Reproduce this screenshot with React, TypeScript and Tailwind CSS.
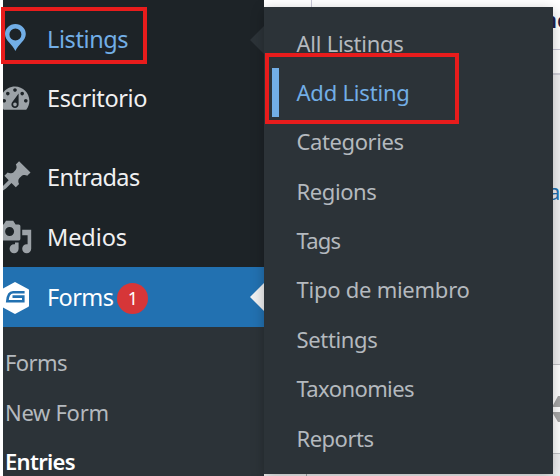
import type { ReactNode } from "react";

const iconBox = "absolute left-[-6px] top-[12px] h-9 w-9";

function PinIcon() {
  return (
    <svg viewBox="0 0 36 36" className={iconBox} fill="#72aee6">
      <path
        fillRule="evenodd"
        d="M18.4 3C12.5 3 8 7.4 8 13.1c0 6.7 7.2 9.9 10.4 16.9 3.2-7 10.4-10.2 10.4-16.9C28.8 7.4 24.3 3 18.4 3zM18.4 7.6a6 6 0 1 1 0 12 6 6 0 0 1 0-12z"
      />
    </svg>
  );
}

function DashIcon({ d }: { d: string }) {
  return (
    <svg viewBox="0 0 20 20" className={iconBox} fill="#9ca2a7">
      <path d={d} />
    </svg>
  );
}

const dashboard =
  "M3.76 16h12.48c1.1-1.37 1.76-3.11 1.76-5 0-4.42-3.58-8-8-8s-8 3.58-8 8c0 1.89.66 3.63 1.76 5zM10 4c.55 0 1 .45 1 1s-.45 1-1 1-1-.45-1-1 .45-1 1-1zM6 6c.55 0 1 .45 1 1s-.45 1-1 1-1-.45-1-1 .45-1 1-1zm8 0c.55 0 1 .45 1 1s-.45 1-1 1-1-.45-1-1 .45-1 1-1zm-5.37 5.55L12 7v6c0 1.1-.9 2-2 2s-2-.9-2-2c0-.57.24-1.08.63-1.45zM4 10c.55 0 1 .45 1 1s-.45 1-1 1-1-.45-1-1 .45-1 1-1zm12 0c.55 0 1 .45 1 1s-.45 1-1 1-1-.45-1-1 .45-1 1-1zm-5 3c0-.55-.45-1-1-1s-1 .45-1 1 .45 1 1 1 1-.45 1-1z";
const thumbtack =
  "M10.44 3.02l1.82-1.82 6.36 6.35-1.83 1.82c-1.05-.68-2.48-.57-3.41.36l-.75.75c-.92.93-1.04 2.35-.35 3.41l-1.83 1.82-2.41-2.41-2.8 2.79c-.42.42-3.38 2.71-3.8 2.29s1.86-3.39 2.28-3.81l2.79-2.79L4.1 9.36l1.83-1.82c1.05.69 2.48.57 3.4-.36l.75-.75c.93-.92 1.05-2.35.36-3.41z";
const media =
  "M13 11V4c0-.55-.45-1-1-1h-1.67L9 1H5L3.67 3H2c-.55 0-1 .45-1 1v7c0 .55.45 1 1 1h10c.55 0 1-.45 1-1zM7 4.5c1.38 0 2.5 1.12 2.5 2.5S8.38 9.5 7 9.5 4.5 8.38 4.5 7 5.62 4.5 7 4.5zM14 6h5v10.5c0 1.38-1.12 2.5-2.5 2.5S14 17.88 14 16.5s1.12-2.5 2.5-2.5c.17 0 .34.02.5.05V9h-3V6zm-4 8.05V13h2v3.5c0 1.38-1.12 2.5-2.5 2.5S7 17.88 7 16.5 8.12 14 9.5 14c.17 0 .34.02.5.05z";

function FormsIcon() {
  return (
    <svg viewBox="0 0 36 36" className={iconBox}>
      <path
        d="M18 4L31 11.200V26.800L18 34L5 26.800V11.200z"
        fill="#fff"
        stroke="#fff"
        strokeWidth="2"
        strokeLinejoin="round"
      />
      <path
        d="M27.600 13.300H16C12.500 13.300 10.800 16 10.300 22.300H26.300V17.600H15.500"
        fill="none"
        stroke="#2271b1"
        strokeWidth="2.600"
      />
    </svg>
  );
}

function Row({ icon, label, className = "", text = "", children }: {
  icon: ReactNode;
  label: string;
  className?: string;
  text?: string;
  children?: ReactNode;
}) {
  return (
    <li className={`relative flex h-[60px] shrink-0 items-center pl-[44px] ${className}`}>
      {icon}
      <span className={`text-[23.5px] leading-8 ${text}`}>{label}</span>
      {children}
    </li>
  );
}

function Sidebar() {
  return (
    <nav className="relative h-full w-[261px] shrink-0 overflow-hidden bg-[#1d2327]">
      <ul className="flex flex-col pt-[9px]">
        <Row icon={<PinIcon />} label="Listings" text="text-[#72aee6] tracking-[-0.4px]" />
        <Row icon={<DashIcon d={dashboard} />} label="Escritorio" text="-mt-0.5 text-[#f0f0f1] tracking-[-0.4px]" />
        <Row icon={<DashIcon d={thumbtack} />} label="Entradas" className="mt-[18px]" text="text-[#f0f0f1] tracking-[-0.6px]" />
        <Row icon={<DashIcon d={media} />} label="Medios" text="text-[#f0f0f1] tracking-[-0.1px]" />
        <Row icon={<FormsIcon />} label="Forms" className="bg-[#2271b1]" text="text-white tracking-[-0.6px]">
          <span className="mt-[3px] ml-1 flex h-[31px] w-[31px] items-center justify-center rounded-full bg-[#d63638] text-[18px] text-white">
            1
          </span>
        </Row>
      </ul>
      <ul className="flex h-[180px] flex-col bg-[#2c3338] pt-[10px] pl-[2px] text-[22px] text-[#b4b9be]">
        <li className="flex h-[50px] shrink-0 items-center tracking-[-0.6px]">Forms</li>
        <li className="flex h-[50px] shrink-0 items-center tracking-[-0.3px]">New Form</li>
        <li className="flex h-[49px] shrink-0 items-center font-semibold tracking-[-0.7px] text-white">Entries</li>
      </ul>
      <svg className="absolute top-[26px] right-0 h-7 w-[14px]" viewBox="0 0 14 28">
        <path d="M14 0v28L0 14z" fill="#2c3338" />
      </svg>
      <svg className="absolute top-[283px] right-0 h-7 w-[14px]" viewBox="0 0 14 28">
        <path d="M14 0v28L0 14z" fill="#f0f0f1" />
      </svg>
    </nav>
  );
}

const links = [
  { label: "All Listings", track: "tracking-[-0.25px]" },
  { label: "Add Listing", track: "tracking-[-0.2px]" },
  { label: "Categories", track: "tracking-[-0.4px]" },
  { label: "Regions", track: "tracking-[-0.4px]" },
  { label: "Tags", track: "tracking-[-0.8px]" },
  { label: "Tipo de miembro", track: "tracking-[-0.25px]" },
  { label: "Settings", track: "tracking-[-0.35px]" },
  { label: "Taxonomies", track: "tracking-[-0.6px]" },
  { label: "Reports", track: "tracking-[-0.5px]" },
];

function Flyout() {
  return (
    <ul className="absolute top-[7px] left-[264px] flex h-[467px] w-[289px] flex-col bg-[#2c3338] pt-[11.6px] text-[22px] text-[#b4b9be] shadow-[0_3px_12px_rgba(0,0,0,0.25)]">
      {links.map(({ label, track }) => (
        <li
          key={label}
          className={`ml-2 flex h-[49.35px] shrink-0 items-center border-l-[7px] pl-[17.5px] ${track} ${
            label === "Add Listing" ? "border-[#72aee6] text-[#72aee6]" : "border-transparent"
          }`}
        >
          {label}
        </li>
      ))}
    </ul>
  );
}

function Content() {
  return (
    <main className="flex min-w-0 flex-1 flex-col overflow-hidden bg-[#f0f0f1]">
      <div className="flex h-[50px] shrink-0 border-b border-[#c9c8d8] bg-white">
        <div className="w-12 shrink-0 border-r border-[#c9c8d8]" />
        <span className="mt-[3px] ml-[231px] text-[22px] font-semibold text-[#23204a]">nc</span>
      </div>
      <div className="h-[25px] shrink-0 border-b-2 border-[#d2d2da] bg-white" />
      <div className="h-[289px] shrink-0 pt-[100px] pl-[284px] text-[22px] text-[#2271b1]">a</div>
      <div className="flex h-[90px] shrink-0 flex-col border-y border-[#c3c4c7] bg-white pt-[31px] pl-[288px]">
        <svg className="h-[26px] w-7 shrink-0" viewBox="0 0 28 26" fill="#a7a7a7">
          <path d="M0 11L6 0h9v11zM0 16h15v10H6z" />
        </svg>
      </div>
      <div className="flex flex-1">
        <div className="w-[43px] border-r border-[#a7aaad]" />
      </div>
    </main>
  );
}

export default function App() {
  return (
    <div className="relative flex h-[476px] w-[560px] overflow-hidden bg-white pl-[3px] font-['Noto_Sans','Open_Sans',sans-serif]">
      <Sidebar />
      <Content />
      <Flyout />
      <div className="absolute top-[7px] left-px h-[57px] w-[146px] border-4 border-[#e81c1c]" />
      <div className="absolute top-[53px] left-[265px] h-[71px] w-[194px] border-4 border-[#e81c1c]" />
    </div>
  );
}
